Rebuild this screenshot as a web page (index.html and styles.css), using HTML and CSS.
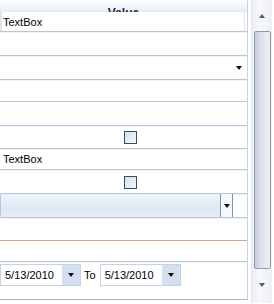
FILE: index.html
```html
<!DOCTYPE html>
<html>
<head>
<meta charset="utf-8">
<link rel="stylesheet" href="styles.css">
</head>
<body>
<div class="frame">
  <div class="grid">
    <div class="head"><span>Value</span></div>
    <div class="row r1"><div class="tb">TextBox</div></div>
    <div class="row r2"></div>
    <div class="row r3"><span class="arr"></span></div>
    <div class="row r4"></div>
    <div class="row r5 cream"></div>
    <div class="row r6"><span class="chk"></span></div>
    <div class="row r7"><div class="tb">TextBox</div></div>
    <div class="row r8"><span class="chk"></span></div>
    <div class="row r9"><div class="combo"><div class="cfield"></div><div class="cbtn"><span class="arr"></span></div></div></div>
    <div class="row r10 orange"></div>
    <div class="row r11"></div>
    <div class="r12">
      <div class="dp"><span class="dtext">5/13/2010</span><span class="dbtn"><span class="arr"></span></span></div>
      <span class="to">To</span>
      <div class="dp"><span class="dtext">5/13/2010</span><span class="dbtn"><span class="arr"></span></span></div>
    </div>
  </div>
  <div class="scroll">
    <div class="sbtn"><span class="up"></span></div>
    <div class="thumb"></div>
    <div class="sbtn"><span class="arr dn"></span></div>
  </div>
</div>
</body>
</html>
```
FILE: styles.css
```css
body {margin:0; font-family:"Liberation Sans", Arial, sans-serif; font-size:11px; color:#000; background:#fff}
.frame {display:flex; width:274px; height:304px}
.grid {width:247px; height:299px; border-right:1px solid #c9d3dd; border-bottom:1px solid #a3b5cb; overflow:hidden; display:flex; flex-direction:column}
.head {height:12px; overflow:hidden; background:linear-gradient(#ffffff, #f3f6fa 60%, #e3ebf6); text-align:center; font-weight:bold; font-size:12px; line-height:12px; color:#1e2a3a}
.head span {display:block; padding-top:7px}
.row {border-bottom:1px solid #bac6d2; box-shadow:0 1px 0 #eef2f6; display:flex; align-items:center; position:relative}
.r1 {height:19px}
.r2 {height:23px}
.r3 {height:23px; justify-content:flex-end}
.r4 {height:21px}
.r5 {height:23px}
.r6 {height:22px; justify-content:center}
.r7 {height:20px}
.r8 {height:23px; justify-content:center}
.r9 {height:23px; align-items:stretch}
.r10 {height:22px}
.r11 {height:20px}
.cream {background:#fffefa}
.orange {border-bottom-color:#d9a489; box-shadow:none}
.tb {padding-left:3px; font-size:11px}
.r1 .tb {border-left:2px solid #dbe4ef; border-right:1px solid #dde4ec; padding-left:1px; height:100%; display:flex; align-items:center; flex:1; margin-right:2px}
.arr {display:inline-block; width:0; height:0; border-left:3.5px solid transparent; border-right:3.5px solid transparent; border-top:4px solid #111}
.r3 .arr {margin-right:5px; margin-top:1px}
.chk {width:11px; height:11px; border:1px solid #3d4b5e; background:linear-gradient(135deg, #d5dfec, #f4f7fb); margin-left:13px; margin-top:1px}
.combo {width:233px; display:flex; border-top:0; background:linear-gradient(#eef3fb, #dfe8f5 60%, #e5edf8)}
.cfield {flex:1; border-left:1px solid #b5c3d4; border-radius:2px 0 0 2px}
.cbtn {width:11px; border-left:1px solid #7f93ab; border-right:1px solid #7f93ab; display:flex; align-items:center; justify-content:center; background:#f5f8fc}
.cbtn .arr {margin-top:1px}
.r12 {flex:1; display:flex; align-items:flex-start; padding-top:2px}
.dp {display:flex; height:20px; border:1px solid #c6d3e2; width:79px; background:#fff; align-items:center}
.dtext {flex:1; padding-left:4px}
.dbtn {width:18px; height:100%; background:#d4e0f1; display:flex; align-items:center; justify-content:center}
.to {margin:0 4px 0 3px; line-height:22px}
.scroll {margin-left:3px; width:20px; height:303px; background:linear-gradient(to right, #eceef1, #f7f8fa 40%, #eef0f3); display:flex; flex-direction:column; align-items:center; border-left:1px solid #e4e7eb}
.sbtn {height:31px; width:100%; display:flex; align-items:center; justify-content:center}
.sbtn:last-child {height:32px}
.up {width:0; height:0; border-left:3.5px solid transparent; border-right:3.5px solid transparent; border-bottom:4px solid #4a5d7c}
.dn {border-top-color:#4a5d7c}
.thumb {width:15px; height:236px; border:1px solid #8a9ab0; border-radius:2px; background:linear-gradient(to right, #c3cddb, #d9e0ea 35%, #e6eaf0 65%, #efeee6)}
```
